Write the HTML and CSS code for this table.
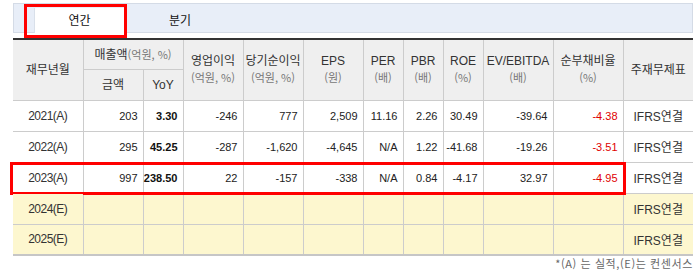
FILE: index.html
```html
<!DOCTYPE html>
<html lang="ko">
<head>
<meta charset="utf-8">
<link rel="stylesheet" href="styles.css">
</head>
<body>
<div class="page">
  <div class="tabs">
    <div class="tab active">연간</div>
    <div class="tab">분기</div>
  </div>
  <table class="fin">
    <colgroup>
      <col class="w70"><col class="w60"><col class="w40"><col class="w60"><col class="w60"><col class="w60">
      <col class="w40"><col class="w40"><col class="w40"><col class="w70"><col class="w70"><col class="w70">
    </colgroup>
    <thead>
      <tr class="h1">
        <th rowspan="2">재무년월</th>
        <th colspan="2">매출액<span class="u">(억원, %)</span></th>
        <th rowspan="2">영업이익<br><span class="u">(억원, %)</span></th>
        <th rowspan="2">당기순이익<br><span class="u">(억원, %)</span></th>
        <th rowspan="2">EPS<br><span class="u">(원)</span></th>
        <th rowspan="2">PER<br><span class="u">(배)</span></th>
        <th rowspan="2">PBR<br><span class="u">(배)</span></th>
        <th rowspan="2">ROE<br><span class="u">(%)</span></th>
        <th rowspan="2">EV/EBITDA<br><span class="u">(배)</span></th>
        <th rowspan="2">순부채비율<br><span class="u">(%)</span></th>
        <th rowspan="2">주재무제표</th>
      </tr>
      <tr class="h2">
        <th>금액</th>
        <th>YoY</th>
      </tr>
    </thead>
    <tbody>
      <tr>
        <td class="yr">2021(A)</td><td>203</td><td class="b">3.30</td><td>-246</td><td>777</td><td>2,509</td>
        <td>11.16</td><td>2.26</td><td>30.49</td><td>-39.64</td><td class="red">-4.38</td><td class="std">IFRS연결</td>
      </tr>
      <tr>
        <td class="yr">2022(A)</td><td>295</td><td class="b">45.25</td><td>-287</td><td>-1,620</td><td>-4,645</td>
        <td>N/A</td><td>1.22</td><td>-41.68</td><td>-19.26</td><td class="red">-3.51</td><td class="std">IFRS연결</td>
      </tr>
      <tr>
        <td class="yr mark">2023(A)</td><td>997</td><td class="b">238.50</td><td>22</td><td>-157</td><td>-338</td>
        <td>N/A</td><td>0.84</td><td>-4.17</td><td>32.97</td><td class="red">-4.95</td><td class="std">IFRS연결</td>
      </tr>
      <tr class="est">
        <td class="yr">2024(E)</td><td></td><td></td><td></td><td></td><td></td>
        <td></td><td></td><td></td><td></td><td></td><td class="std">IFRS연결</td>
      </tr>
      <tr class="est">
        <td class="yr">2025(E)</td><td></td><td></td><td></td><td></td><td></td>
        <td></td><td></td><td></td><td></td><td></td><td class="std">IFRS연결</td>
      </tr>
    </tbody>
  </table>
  <p class="note">*(A) 는 실적,(E)는 컨센서스</p>
</div>
</body>
</html>
```

FILE: styles.css
```css
html, body {
  margin: 0;
  padding: 0;
  background: #fff;
}
body {
  font-family: "Liberation Sans", "Noto Sans CJK KR", sans-serif;
  color: #333;
  overflow: hidden;
}
.page {
  width: 680px;
  padding: 3px 0 0 13px;
}
.tabs {
  display: flex;
  align-items: flex-end;
  height: 28px;
  padding-left: 20px;
  border: 1px solid #d4dbe6;
  background: #e8eef8;
}
.tab {
  width: 112px;
  height: 24px;
  line-height: 24px;
  text-align: center;
  font-family: "Noto Sans CJK KR", sans-serif;
  font-size: 12px;
  color: #111;
}
.tab.active {
  position: relative;
  width: 90px;
  height: 25px;
  margin-bottom: -1px;
  background: #fff;
  border-left: 1px solid #d9e0ea;
  box-sizing: border-box;
}
.tab.active::after {
  content: "";
  position: absolute;
  left: -11px;
  top: -4px;
  right: -3px;
  bottom: -5px;
  border: 3px solid #f00;
}
.fin {
  margin-top: 5px;
  width: 680px;
  table-layout: fixed;
  border-collapse: collapse;
  border-top: 2px solid #333;
  border-bottom: 2px solid #c6c6c6;
  border-left: hidden;
  border-right: hidden;
}
.w40 { width: 40px; }
.w60 { width: 60px; }
.w70 { width: 70px; }
.fin th, .fin td {
  border: 1px solid #cccccc;
  padding: 0;
}
.fin th {
  background: #efefef;
  font-family: "Liberation Sans", "Noto Sans CJK KR", sans-serif;
  font-weight: normal;
  font-size: 12px;
  line-height: 16px;
  color: #333;
  text-align: center;
}
.fin .u {
  font-family: "Noto Sans CJK KR", sans-serif;
  font-size: 11px;
  color: #777;
}
.fin tr.h1 { height: 30px; }
.fin tr.h2 { height: 31px; }
.fin tbody tr { height: 31px; }
.fin td {
  font-size: 11px;
  text-align: right;
  padding-right: 5px;
  color: #222;
}
.fin td.yr {
  position: relative;
  text-align: center;
  padding-right: 0;
  font-size: 12px;
  letter-spacing: -0.5px;
  color: #333;
}
.fin td.b { font-weight: bold; color: #111; }
.fin td.red { color: #e00000; }
.fin td.std {
  text-align: center;
  padding-right: 0;
  font-size: 12px;
  color: #333;
}
.fin tr.est td { background: #fdf7cf; }
.fin td.mark::after {
  content: "";
  position: absolute;
  left: -3px;
  top: -1px;
  width: 610px;
  height: 27px;
  border: 3px solid #f00;
}
.note {
  margin: 1px 0 0;
  text-align: right;
  font-family: "Noto Sans CJK KR", sans-serif;
  font-size: 11px;
  line-height: 13px;
  letter-spacing: 0.6px;
  color: #666;
}
```
